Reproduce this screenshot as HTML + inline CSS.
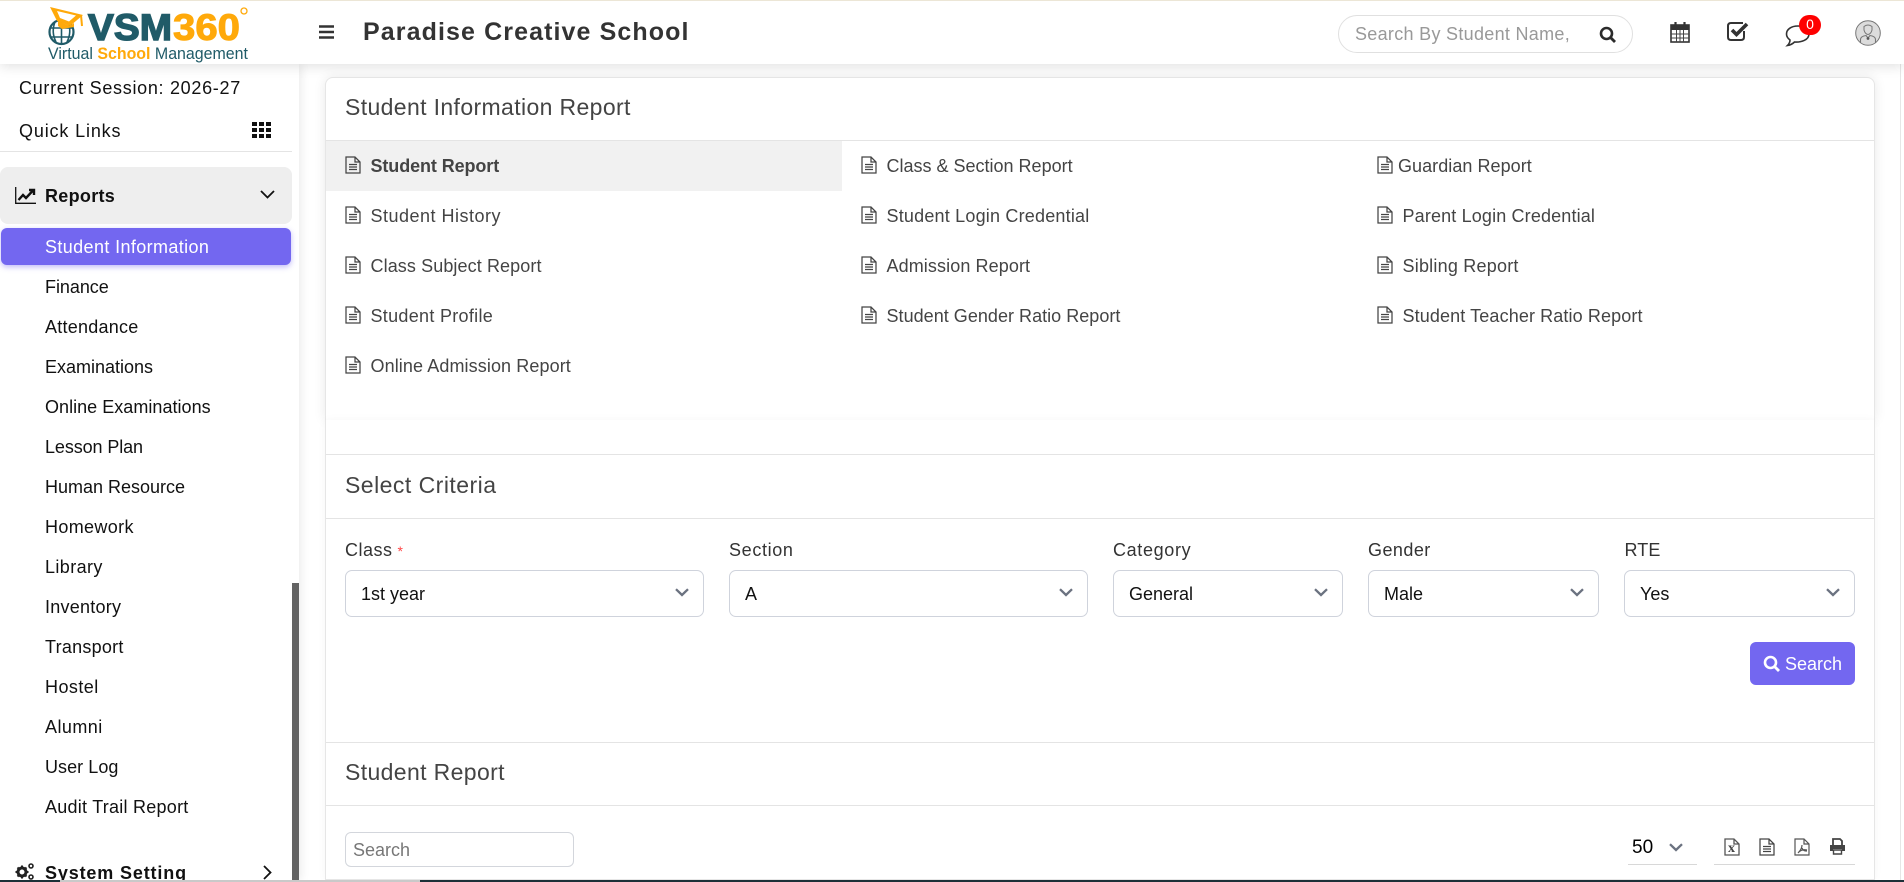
<!DOCTYPE html>
<html><head><meta charset="utf-8"><title>Student Information Report</title>
<style>
*{box-sizing:border-box}
html,body{margin:0;padding:0;width:1904px;height:882px;overflow:hidden;background:#fff;font-family:"Liberation Sans",sans-serif;color:#000}
.a{position:absolute;white-space:nowrap}
#hdr{position:absolute;left:0;top:0;width:1904px;height:64px;background:#fff;border-top:1px solid #ece6d6;box-shadow:0 2px 12px rgba(0,0,0,.13);z-index:5}
#side{position:absolute;left:0;top:64px;width:299px;height:816px;background:#fff;box-shadow:3px 0 8px rgba(0,0,0,.07);z-index:3;overflow:hidden}
.s{position:absolute;left:45px;font-size:18px;letter-spacing:.1px;line-height:24px;color:#111;white-space:nowrap}
#card{position:absolute;left:325px;top:77px;width:1550px;height:343px;background:#fff;border:1px solid #e6e6e6;border-bottom:0;border-radius:8px 8px 0 0;box-shadow:0 0 12px rgba(0,0,0,.09);z-index:1}
#main{position:absolute;left:325px;top:420px;width:1550px;height:460px;background:#fff;border:1px solid #e6e6e6;border-top:0;z-index:1;box-shadow:0 0 8px rgba(0,0,0,.04)}
.h{position:absolute;left:345px;font-size:23px;letter-spacing:.37px;line-height:30px;color:#444;white-space:nowrap;z-index:2}
.l{position:absolute;height:1px;background:#e4e4e4;left:326px;width:1548px;z-index:2}
.r{position:absolute;font-size:18px;letter-spacing:.05px;line-height:24px;color:#444;white-space:nowrap;z-index:2;margin:1px 0 0 .5px}
.lb{position:absolute;font-size:18px;letter-spacing:.65px;line-height:22px;top:539px;color:#333;z-index:2;white-space:nowrap}
.sel{position:absolute;top:570px;height:47px;border:1px solid #cfd3dc;border-radius:7px;background:#fff;font-size:18px;line-height:46px;padding-left:15px;color:#111;z-index:2}
.sel svg{position:absolute;right:14px;top:17px}
svg{display:block}
</style></head><body>
<svg width="0" height="0" style="position:absolute"><defs>
<symbol id="doc" viewBox="0 0 16 18"><path d="M1 1H10L15 6V17H1Z M10 1V6H15 M4 8.500H12 M4 11H12 M4 13.500H12" fill="none" stroke="#444" stroke-width="1.250"/></symbol>
<symbol id="chev" viewBox="0 0 14 9"><path d="M1 1.200L7 7L13 1.200" fill="none" stroke="#6b7280" stroke-width="2.300"/></symbol>
</defs></svg>

<div id="hdr">
 <svg class="a" style="left:46px;top:0" width="206" height="64" viewBox="0 0 206 64">
  <circle cx="15.500" cy="31" r="12" fill="none" stroke="#205b68" stroke-width="2.200"/><path d="M4 27H27M4 36H27M15.500 19V43M9 21Q5 31 10 41M22 21Q26 31 21 41" fill="none" stroke="#205b68" stroke-width="1.600"/>
  <path d="M4 6L37 14L24 25L11 20Z" fill="#ffa90a"/><path d="M11 10L30 14.500L23 20.500L14 17Z" fill="#fff"/><path d="M35 14L36 25" stroke="#ffa90a" stroke-width="2" fill="none"/><path d="M12 20L24 25L28 22V26L16 28L12 25Z" fill="#ffa90a"/>
  <text x="42" y="39" font-family="Liberation Sans" font-weight="700" font-size="37" fill="#205b68" stroke="#205b68" stroke-width="1.400" textLength="84" lengthAdjust="spacingAndGlyphs">VSM</text>
  <text x="127" y="39" font-family="Liberation Sans" font-weight="700" font-size="37" fill="#ffa90a" stroke="#ffa90a" stroke-width="1" textLength="67" lengthAdjust="spacingAndGlyphs">360</text>
  <circle cx="198" cy="10" r="3" fill="none" stroke="#ffa90a" stroke-width="1.300"/>
  <text x="2" y="58" font-family="Liberation Sans" font-size="16.500" fill="#205b68" textLength="200" lengthAdjust="spacingAndGlyphs">Virtual <tspan fill="#ffa90a" font-weight="700">School</tspan> Management</text>
 </svg>
 <svg class="a" style="left:319px;top:24px" width="15" height="14"><path d="M0 1.500H15M0 7H15M0 12.500H15" stroke="#333" stroke-width="2.600"/></svg>
 <div class="a" style="left:363px;top:15px;font-size:25px;font-weight:700;letter-spacing:1.100px;line-height:32px;color:#333">Paradise Creative School</div>
 <div class="a" style="left:1338px;top:14px;width:295px;height:38px;border:1px solid #e0e0e0;border-radius:19px;background:#fff"></div>
 <div class="a" style="left:1355px;top:21px;width:215px;overflow:hidden;font-size:18px;letter-spacing:.3px;line-height:24px;color:#999">Search By Student Name, Roll</div>
 <svg class="a" style="left:1599px;top:25px" width="18" height="18" viewBox="0 0 18 18"><circle cx="7.500" cy="7.500" r="5.500" fill="none" stroke="#2b2b2b" stroke-width="2.600"/><path d="M11.500 11.500L16 16" stroke="#2b2b2b" stroke-width="2.800"/></svg>
 <svg class="a" style="left:1670px;top:20px" width="20" height="22" viewBox="0 0 20 22"><rect x="1" y="4" width="18" height="17" fill="#fff" stroke="#333" stroke-width="1.600"/><rect x="1" y="4" width="18" height="5" fill="#333"/><path d="M5.500 1V6M14.500 1V6" stroke="#333" stroke-width="2.200"/><path d="M1 13H19M1 17H19M6.500 9V21M10 9V21M13.500 9V21" stroke="#444" stroke-width="1"/></svg>
 <svg class="a" style="left:1727px;top:20px" width="23" height="20" viewBox="0 0 23 20"><path d="M17 10V16Q17 19 14 19H4Q1 19 1 16V5Q1 2 4 2H16" fill="none" stroke="#333" stroke-width="2"/><path d="M5 9L9.500 13.500L20 3" fill="none" stroke="#333" stroke-width="3.600"/></svg>
 <svg class="a" style="left:1785px;top:23px" width="26" height="24" viewBox="0 0 26 24"><path d="M13 2C6 2 1.500 5.500 1.500 10C1.500 12.500 3 14.500 5 16C5 18 4 20 2.500 21.500C6 21 8 19.500 9.500 18C16 18.500 24 16 24 10C24 5.500 19 2 13 2Z" fill="#fff" stroke="#333" stroke-width="1.600"/></svg>
 <div class="a" style="left:1799px;top:14px;width:22px;height:20px;border-radius:11px;background:#fe0000;color:#fff;font-size:14px;line-height:19px;text-align:center">0</div>
 <svg class="a" style="left:1855px;top:19px" width="26" height="26" viewBox="0 0 26 26"><circle cx="13" cy="13" r="12.300" fill="#dcdcdc" stroke="#777" stroke-width="1"/><path d="M9 6.500Q13 3.500 17 6.500V10Q16 14 13 14.500Q10 14 9 10Z" fill="none" stroke="#777" stroke-width="1"/><path d="M5.500 23V19.500C5.500 17 8 16 11 15.500L13 18L15 15.500C18 16 20.500 17 20.500 19.500V23" fill="none" stroke="#777" stroke-width="1.100"/><circle cx="13" cy="18.500" r="1.400" fill="#555"/></svg>
</div>

<div id="side">
 <div class="s" style="left:19px;top:12px;letter-spacing:.7px">Current Session: 2026-27</div>
 <div class="s" style="left:19px;top:55px;letter-spacing:.85px">Quick Links</div>
 <svg class="a" style="left:252px;top:58px" width="19" height="16"><path d="M0 0h5v4H0zM7 0h5v4H7zM14 0h5v4h-5zM0 6h5v4H0zM7 6h5v4H7zM14 6h5v4h-5zM0 12h5v4H0zM7 12h5v4H7zM14 12h5v4h-5z" fill="#111"/></svg>
 <div class="a" style="left:0;top:87px;width:292px;height:1px;background:#e4e4e4"></div>
 <div class="a" style="left:0;top:103px;width:292px;height:57px;background:#eee;border-radius:8px"></div>
 <svg class="a" style="left:15px;top:123px" width="21" height="17" viewBox="0 0 21 17"><path d="M.7 0V16.300H21" fill="none" stroke="#111" stroke-width="1.300"/><path d="M3.500 13L8 8L11 11L18 3.500M14 3H19V8" fill="none" stroke="#111" stroke-width="2.400"/></svg>
 <div class="s" style="top:120px;font-weight:700;letter-spacing:.3px">Reports</div>
 <svg class="a" style="left:260px;top:126px" width="15" height="9" viewBox="0 0 15 9"><path d="M1 1L7.500 7.500L14 1" fill="none" stroke="#111" stroke-width="1.800"/></svg>
 <div class="a" style="left:1px;top:164px;width:290px;height:37px;background:#7367f0;border-radius:6px;box-shadow:0 2px 6px rgba(115,103,240,.45)"></div>
 <div class="s" style="top:171px;color:#fff;letter-spacing:.38px">Student Information</div>
 <div class="s" style="top:211px;letter-spacing:-.05px">Finance</div>
 <div class="s" style="top:251px;letter-spacing:.25px">Attendance</div>
 <div class="s" style="top:291px;letter-spacing:0">Examinations</div>
 <div class="s" style="top:331px;letter-spacing:.03px">Online Examinations</div>
 <div class="s" style="top:371px;letter-spacing:-.1px">Lesson Plan</div>
 <div class="s" style="top:411px;letter-spacing:0">Human Resource</div>
 <div class="s" style="top:451px;letter-spacing:.35px">Homework</div>
 <div class="s" style="top:491px;letter-spacing:.4px">Library</div>
 <div class="s" style="top:531px;letter-spacing:.25px">Inventory</div>
 <div class="s" style="top:571px;letter-spacing:.25px">Transport</div>
 <div class="s" style="top:611px;letter-spacing:.45px">Hostel</div>
 <div class="s" style="top:651px;letter-spacing:.45px">Alumni</div>
 <div class="s" style="top:691px;letter-spacing:.05px">User Log</div>
 <div class="s" style="top:731px;letter-spacing:.25px">Audit Trail Report</div>
 <svg class="a" style="left:15px;top:798px" width="20" height="18" viewBox="0 0 20 18"><circle cx="7" cy="10" r="4" fill="none" stroke="#222" stroke-width="3"/><path d="M7 3.500V6M7 14V16.500M.5 10H3M11 10H13.500M2.500 5.500L4 7M10 13L11.500 14.500M2.500 14.500L4 13M10 7L11.500 5.500" stroke="#222" stroke-width="2"/><circle cx="16" cy="4" r="2" fill="none" stroke="#222" stroke-width="1.600"/><circle cx="16" cy="15" r="2" fill="none" stroke="#222" stroke-width="1.600"/></svg>
 <div class="s" style="top:797px;font-weight:700;letter-spacing:.85px">System Setting</div>
 <svg class="a" style="left:263px;top:801px" width="9" height="15" viewBox="0 0 9 15"><path d="M1 1L7.500 7.500L1 14" fill="none" stroke="#111" stroke-width="1.800"/></svg>
 <div class="a" style="left:292px;top:519px;width:7px;height:297px;background:#636363"></div>
</div>

<div id="card"></div><div id="main"></div>
<div class="a" style="left:1900px;top:64px;width:1px;height:816px;background:#e6e6e6"></div>

<div class="h" style="top:92px">Student Information Report</div>
<div class="l" style="top:140px"></div>
<div class="a" style="left:326px;top:141px;width:516px;height:50px;background:#f1f1f1;z-index:1"></div>

<svg class="a" style="left:344.500px;top:156px;z-index:2" width="16" height="18"><use href="#doc"/></svg><div class="r" style="left:370px;top:153px;font-weight:700;letter-spacing:-.1px">Student Report</div>
<svg class="a" style="left:344.500px;top:206px;z-index:2" width="16" height="18"><use href="#doc"/></svg><div class="r" style="left:370px;top:203px;letter-spacing:.5px">Student History</div>
<svg class="a" style="left:344.500px;top:256px;z-index:2" width="16" height="18"><use href="#doc"/></svg><div class="r" style="left:370px;top:253px;letter-spacing:.1px">Class Subject Report</div>
<svg class="a" style="left:344.500px;top:306px;z-index:2" width="16" height="18"><use href="#doc"/></svg><div class="r" style="left:370px;top:303px;letter-spacing:.3px">Student Profile</div>
<svg class="a" style="left:344.500px;top:356px;z-index:2" width="16" height="18"><use href="#doc"/></svg><div class="r" style="left:370px;top:353px;letter-spacing:.1px">Online Admission Report</div>

<svg class="a" style="left:860.500px;top:156px;z-index:2" width="16" height="18"><use href="#doc"/></svg><div class="r" style="left:886px;top:153px;letter-spacing:0">Class &amp; Section Report</div>
<svg class="a" style="left:860.500px;top:206px;z-index:2" width="16" height="18"><use href="#doc"/></svg><div class="r" style="left:886px;top:203px;letter-spacing:.2px">Student Login Credential</div>
<svg class="a" style="left:860.500px;top:256px;z-index:2" width="16" height="18"><use href="#doc"/></svg><div class="r" style="left:886px;top:253px;letter-spacing:.1px">Admission Report</div>
<svg class="a" style="left:860.500px;top:306px;z-index:2" width="16" height="18"><use href="#doc"/></svg><div class="r" style="left:886px;top:303px;letter-spacing:.03px">Student Gender Ratio Report</div>

<svg class="a" style="left:1376.500px;top:156px;z-index:2" width="16" height="18"><use href="#doc"/></svg><div class="r" style="left:1397.500px;top:153px;letter-spacing:.05px">Guardian Report</div>
<svg class="a" style="left:1376.500px;top:206px;z-index:2" width="16" height="18"><use href="#doc"/></svg><div class="r" style="left:1402px;top:203px;letter-spacing:.15px">Parent Login Credential</div>
<svg class="a" style="left:1376.500px;top:256px;z-index:2" width="16" height="18"><use href="#doc"/></svg><div class="r" style="left:1402px;top:253px;letter-spacing:.22px">Sibling Report</div>
<svg class="a" style="left:1376.500px;top:306px;z-index:2" width="16" height="18"><use href="#doc"/></svg><div class="r" style="left:1402px;top:303px;letter-spacing:.12px">Student Teacher Ratio Report</div>

<div class="l" style="top:454px"></div>
<div class="h" style="top:470px;letter-spacing:.47px">Select Criteria</div>
<div class="l" style="top:518px"></div>

<div class="lb" style="left:345px;letter-spacing:.5px">Class<span style="color:#f44;font-size:14px;margin-left:5px">*</span></div>
<div class="lb" style="left:729px">Section</div>
<div class="lb" style="left:1113px">Category</div>
<div class="lb" style="left:1368px;letter-spacing:.45px">Gender</div>
<div class="lb" style="left:1624.500px;letter-spacing:.1px">RTE</div>
<div class="sel" style="left:345px;width:359px">1st year<svg width="14" height="9"><use href="#chev"/></svg></div>
<div class="sel" style="left:729px;width:359px">A<svg width="14" height="9"><use href="#chev"/></svg></div>
<div class="sel" style="left:1113px;width:230px">General<svg width="14" height="9"><use href="#chev"/></svg></div>
<div class="sel" style="left:1368px;width:231px">Male<svg width="14" height="9"><use href="#chev"/></svg></div>
<div class="sel" style="left:1624px;width:231px">Yes<svg width="14" height="9"><use href="#chev"/></svg></div>

<div class="a" style="left:1750px;top:642px;width:105px;height:43px;background:#7367f0;border-radius:6px;z-index:2"></div>
<svg class="a" style="left:1763px;top:655px;z-index:3" width="18" height="18" viewBox="0 0 18 18"><circle cx="7.500" cy="7.500" r="5.500" fill="none" stroke="#fff" stroke-width="2.600"/><path d="M11.500 11.500L16 16" stroke="#fff" stroke-width="2.800"/></svg>
<div class="a" style="left:1785px;top:652px;font-size:18px;line-height:24px;color:#fff;z-index:3">Search</div>

<div class="l" style="top:742px"></div>
<div class="h" style="top:757px">Student Report</div>
<div class="l" style="top:805px"></div>

<div class="a" style="left:345px;top:832px;width:229px;height:35px;border:1px solid #d3d6dc;border-radius:6px;background:#fff;z-index:2;font-size:18px;line-height:34px;padding-left:7px;color:#777">Search</div>
<div class="a" style="left:1632px;top:836px;font-size:19px;line-height:24px;color:#000;z-index:2">50</div>
<svg class="a" style="left:1669px;top:843px;z-index:2" width="14" height="9"><use href="#chev"/></svg>
<div class="a" style="left:1628px;top:864px;width:69px;height:1px;background:#d8d8d8;z-index:2"></div>
<div class="a" style="left:1714px;top:864px;width:141px;height:1px;background:#d8d8d8;z-index:2"></div>
<svg class="a" style="left:1724px;top:838px;z-index:2" width="16" height="18" viewBox="0 0 16 18"><path d="M1 1H10L15 6V17H1Z M10 1V6H15" fill="none" stroke="#555" stroke-width="1.300"/></svg>
<div class="a" style="left:1728px;top:842px;font:700 14px/14px 'Liberation Serif',serif;color:#444;z-index:3">x</div>
<svg class="a" style="left:1759px;top:838px;z-index:2" width="16" height="18"><use href="#doc"/></svg>
<svg class="a" style="left:1794px;top:838px;z-index:2" width="16" height="18" viewBox="0 0 16 18"><path d="M1 1H10L15 6V17H1Z M10 1V6H15 M8 7Q8 11 4 15M8 10Q9 13 13 13M5 14Q8 11 13 12" fill="none" stroke="#555" stroke-width="1.200"/></svg>
<svg class="a" style="left:1829px;top:838px;z-index:2" width="17" height="17" viewBox="0 0 17 17"><path d="M4 7V1H11L13 3V7" fill="none" stroke="#444" stroke-width="1.800"/><path d="M1 7H16V13H13V11H4V13H1Z" fill="#444"/><path d="M4.500 12H12.500V16H4.500Z" fill="#fff" stroke="#444" stroke-width="1.400"/></svg>

<div class="a" style="left:0;top:880px;width:1904px;height:2px;background:#1d3038;z-index:9"></div>
<div class="a" style="left:60px;top:880px;width:360px;height:2px;background:#c9c9c9;z-index:10"></div>
</body></html>
